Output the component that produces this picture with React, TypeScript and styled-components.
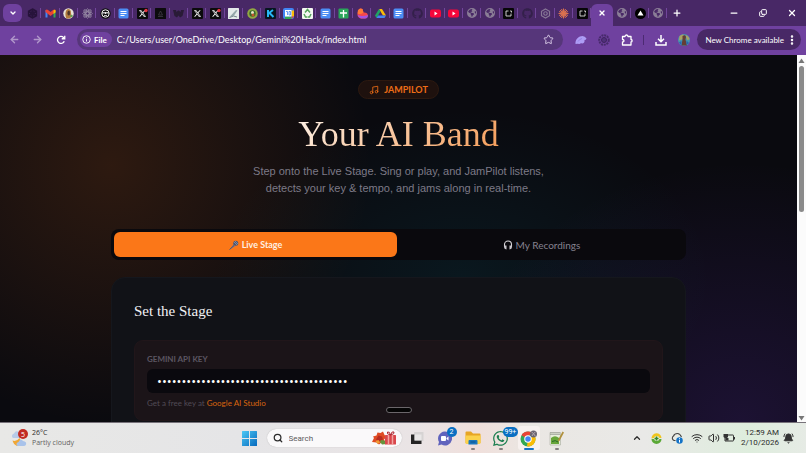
import React, { useState } from "react";
import styled, { createGlobalStyle } from "styled-components";
import { FaXTwitter, FaGithub, FaEarthAmericas, FaWhatsapp } from "react-icons/fa6";
import {
  ArrowLeft,
  ArrowRight,
  BellRing,
  ChevronDown,
  ChevronUp,
  Copy,
  Minus,
  MoreVertical,
  Music,
  Plus,
  Search,
  Star,
  Volume2,
  Wifi,
  X,
} from "lucide-react";

const ui = `Roboto, "Open Sans", sans-serif`;
const bar = `Lato, "Open Sans", sans-serif`;
const body = `Lato, "Liberation Sans", sans-serif`;
const display = `"Liberation Serif", serif`;

const GlobalStyle = createGlobalStyle`
  * { box-sizing: border-box; }
  body { margin: 0; background: #0a0a0f; font-variant-ligatures: none; }
  button, input { font: inherit; color: inherit; border: 0; padding: 0; margin: 0; background: none; }
  svg { display: block; flex: none; }
`;

const Desktop = styled.div`
  display: flex;
  flex-direction: column;
  height: 100vh;
  overflow: hidden;
  font-family: ${ui};
`;

/* ---------- Browser chrome ---------- */

const TabStrip = styled.div`
  display: flex;
  flex: none;
  height: 26px;
  padding-left: 3px;
  background: #482866;
  color: #fff;
`;

const TabSearch = styled.button`
  display: grid;
  place-items: center;
  width: 19px;
  height: 18px;
  margin: 4px 1px 0 0;
  border-radius: 6px;
  background: #6f419f;
`;

const TabButton = styled.button<{ $fixed?: boolean }>`
  display: flex;
  align-items: center;
  justify-content: center;
  flex: ${(p) => (p.$fixed ? "0 0 18px" : "1 1 0")};
  min-width: 0;
  height: 26px;
  background: linear-gradient(#71459b, #71459b) right 8px / 1px 10px no-repeat;
`;

const ActiveTab = styled.button`
  display: grid;
  place-items: center;
  flex: 0 0 22px;
  height: 22px;
  margin-top: 4px;
  padding-bottom: 4px;
  border-radius: 6px 6px 0 0;
  background: #6f419f;
`;

const StripButton = styled.button`
  display: grid;
  place-items: center;
  width: 20px;
  height: 26px;
`;

const WindowControls = styled.div`
  display: flex;
  margin-left: 32px;
`;

const WindowButton = styled.button`
  display: grid;
  place-items: center;
  width: 29px;
  height: 26px;
`;

const Toolbar = styled.div`
  display: flex;
  align-items: center;
  flex: none;
  height: 29px;
  padding: 0 5px 2px 3px;
  background: #6f419f;
  color: #fff;
  font-family: ${bar};
`;

const ToolButton = styled.button<{ $dim?: boolean }>`
  display: grid;
  place-items: center;
  width: 23px;
  height: 22px;
  opacity: ${(p) => (p.$dim ? 0.45 : 1)};
`;

const AddressBar = styled.div`
  display: flex;
  align-items: center;
  flex: 1;
  min-width: 0;
  height: 21px;
  margin: 0 6px 0 5px;
  padding: 0 9px 0 3px;
  border-radius: 11px;
  background: #56367a;
`;

const FileChip = styled.span`
  display: flex;
  align-items: center;
  gap: 3px;
  height: 15px;
  padding: 0 5px 0 2px;
  margin-right: 5px;
  border-radius: 8px;
  background: #6f419f;
  font-size: 8px;
  font-weight: 700;
`;

const AddressInput = styled.input`
  flex: 1;
  min-width: 0;
  font-size: 9px;
  outline: none;
`;

const ToolDivider = styled.span`
  width: 1px;
  height: 10px;
  margin: 0 5px;
  background: #4c2a72;
`;

const UpdateButton = styled.button`
  display: flex;
  align-items: center;
  gap: 2px;
  height: 21px;
  padding: 0 3px 0 8px;
  margin-left: 2px;
  border-radius: 11px;
  background: #482866;
  font-size: 8px;
  white-space: nowrap;
`;

/* ---------- Page ---------- */

const Viewport = styled.div`
  display: flex;
  flex: 1;
  min-height: 0;
`;

const Page = styled.main`
  position: relative;
  flex: 1;
  min-width: 0;
  overflow: hidden;
  padding: 25px 24px 0;
  font-family: ${body};
  background:
    radial-gradient(ellipse 260px 260px at 14% 30%, rgba(249, 115, 22, 0.15), transparent 100%),
    radial-gradient(ellipse 250px 170px at 58% 61%, rgba(6, 182, 212, 0.08), transparent 100%),
    radial-gradient(ellipse 290px 260px at 93% 100%, rgba(124, 58, 237, 0.16), transparent 100%),
    #0a0a0f;
`;

const Container = styled.div`
  display: flex;
  flex-direction: column;
  max-width: 575px;
  margin: 0 auto;
`;

const Hero = styled.header`
  display: flex;
  flex-direction: column;
  align-items: center;
  text-align: center;
`;

const Badge = styled.div`
  display: flex;
  align-items: center;
  gap: 5px;
  height: 19px;
  padding: 0 10px;
  border: 1px solid #2d1910;
  border-radius: 10px;
  background: #1e110e;
  color: #ee6d16;
  font-size: 9px;
  font-weight: 700;
`;

const Title = styled.h1`
  margin: 9px 0 0;
  font-family: ${display};
  font-size: 36px;
  font-weight: 400;
  line-height: 52px;
  background: linear-gradient(135deg, #fff5ec 0%, #f9ceac 40%, #f59a54 100%);
  -webkit-background-clip: text;
  background-clip: text;
  color: transparent;
`;

const Lead = styled.p`
  margin: 3px 0 0;
  color: #7d7a87;
  font-family: "Liberation Sans", sans-serif;
  font-size: 11px;
  line-height: 17px;
`;

const Tabs = styled.div`
  display: grid;
  grid-template-columns: 1fr 1fr;
  gap: 3px;
  margin-top: 32px;
  padding: 3px;
  border-radius: 8px;
  background: #0a090d;
`;

const TabChoice = styled.button<{ $active: boolean }>`
  display: flex;
  align-items: center;
  justify-content: center;
  gap: 3px;
  height: 25px;
  border-radius: 6px;
  background: ${(p) => (p.$active ? "#fb7718" : "transparent")};
  color: ${(p) => (p.$active ? "#fff0e2" : "#85828f")};
  font-size: ${(p) => (p.$active ? "9px" : "10px")};
  font-weight: ${(p) => (p.$active ? 700 : 400)};
`;

const Card = styled.section`
  margin-top: 17px;
  padding: 21px 22px 40px;
  border: 1px solid #15171d;
  border-radius: 14px;
  background: #111217;
`;

const CardTitle = styled.h2`
  margin: 0;
  color: #f2f1f4;
  font-family: ${display};
  font-size: 15px;
  font-weight: 400;
  line-height: 24px;
`;

const KeyPanel = styled.div`
  display: flex;
  flex-direction: column;
  margin-top: 17px;
  padding: 12px 12px 11px;
  border: 1px solid #21161a;
  border-radius: 9px;
  background: #1b1418;
`;

const KeyLabel = styled.label`
  color: #5c5662;
  font-size: 8px;
  font-weight: 700;
  line-height: 12px;
`;

const KeyInput = styled.input`
  height: 24px;
  margin-top: 4px;
  padding: 0 10px;
  border-radius: 6px;
  background: #0a090e;
  color: #fff;
  font-family: "Open Sans", sans-serif;
  font-size: 13px;
  outline: none;
`;

const KeyHint = styled.p`
  margin: 4px 0 0;
  color: #514b56;
  font-size: 8px;
  line-height: 12px;
`;

const KeyLink = styled.a`
  color: #d9640f;
  text-decoration: none;
`;

const Handle = styled.div`
  position: absolute;
  left: calc(50% - 13px);
  bottom: 9px;
  width: 26px;
  height: 6px;
  border: 1px solid #6b676b;
  border-radius: 3px;
  background: #050505;
`;

const ScrollTrack = styled.div`
  display: flex;
  flex-direction: column;
  align-items: center;
  flex: 0 0 9px;
  padding: 3px 0 1px;
  background: #fbfbfb;
`;

const ScrollRun = styled.div`
  display: flex;
  flex-direction: column;
  flex: 1;
  padding: 2px 0;
`;

const ScrollThumb = styled.div`
  flex: 0 0 42%;
  width: 5px;
  border-radius: 3px;
  background: #8a8a8a;
`;

/* ---------- Taskbar ---------- */

const Taskbar = styled.footer`
  display: grid;
  grid-template-columns: 1fr auto 1fr;
  align-items: center;
  flex: none;
  height: 31px;
  border-top: 1px solid #77727a;
  background: linear-gradient(90deg, #e8e8e6 0%, #e5e5e7 30%, #eae4e5 52%, #f0dfdb 59%, #eae7e3 66%, #e9e9e7 80%, #deeddd 93%, #e6ebe5 100%);
  color: #2c2c2c;
`;

const Weather = styled.button`
  display: flex;
  align-items: center;
  justify-self: start;
  gap: 4px;
  padding-left: 11px;
  text-align: left;
`;

const TwoLines = styled.span<{ $end?: boolean }>`
  display: flex;
  flex-direction: column;
  text-align: ${(p) => (p.$end ? "right" : "left")};
  font-family: ${(p) => (p.$end ? ui : `"Open Sans", sans-serif`)};
  font-size: ${(p) => (p.$end ? "8px" : "7px")};
  line-height: 10px;
  white-space: nowrap;
`;

const Muted = styled.span`
  color: #626262;
`;

const Apps = styled.div`
  display: flex;
  align-items: center;
`;

const StartButton = styled.button`
  display: grid;
  place-items: center;
  width: 18px;
  height: 24px;
  margin: 0 8px 0 5px;
`;

const SearchBox = styled.label`
  display: flex;
  align-items: center;
  gap: 6px;
  width: 135px;
  height: 18px;
  margin-right: 1px;
  padding: 0 5px 0 6px;
  border-radius: 9px;
  background: #faf9fa;
  box-shadow: 0 0 1px #a9a9a9;
`;

const SearchInput = styled.input`
  flex: 1;
  min-width: 0;
  font-size: 8px;
  outline: none;
  &::placeholder { color: #5c5c5c; opacity: 1; }
`;

const AppButton = styled.button<{ $mark?: "dot" | "bar" }>`
  position: relative;
  display: grid;
  place-items: center;
  width: 22px;
  height: 24px;
  margin: 0 3px;
  border-radius: 3px;
  background: ${(p) => (p.$mark === "bar" ? "#f7f1ef" : "transparent")};
  &::after {
    content: "";
    position: absolute;
    bottom: 0;
    width: ${(p) => (p.$mark === "bar" ? "10px" : p.$mark === "dot" ? "4px" : "0")};
    height: 2px;
    border-radius: 1px;
    background: ${(p) => (p.$mark === "bar" ? "#1673c4" : "#858080")};
  }
`;

const Count = styled.span`
  position: absolute;
  top: 1px;
  left: 13px;
  min-width: 10px;
  height: 10px;
  padding: 0 2px;
  border-radius: 5px;
  background: #0a6fc2;
  color: #fff;
  font-size: 7px;
  line-height: 10px;
  text-align: center;
`;

const Tray = styled.div`
  display: flex;
  align-items: center;
  justify-self: end;
  padding-right: 12px;
`;

const TrayButton = styled.button<{ $wide?: boolean }>`
  display: grid;
  place-items: center;
  width: ${(p) => (p.$wide ? "20px" : "15px")};
  height: 22px;
`;

const Clock = styled.button`
  margin: 0 4px 0 4px;
`;

/* ---------- Drawings ---------- */

type Kind =
  | "knot" | "gmail" | "avatar" | "flower" | "face" | "docs" | "x" | "xdot" | "peak" | "wing"
  | "photo" | "kiwi" | "k" | "calendar" | "recycle" | "sheets" | "swirl" | "drive" | "github"
  | "youtube" | "globe" | "frame" | "gear" | "burst" | "triangle";

const petals = [0, 45, 90, 135];

function Favicon({ kind }: { kind: Kind }) {
  if (kind === "github") return <FaGithub size={11} color="#33204a" />;
  if (kind === "globe") return <FaEarthAmericas size={10} color="#8a7d96" />;
  return (
    <svg width="11" height="11" viewBox="0 0 22 22" aria-hidden="true">
      {kind === "knot" && (
        <g fill="none" stroke="#27133b" strokeWidth="3">
          <circle cx="11" cy="11" r="3.4" />
          <path d="M11 2 18.8 6.5v9L11 20l-7.8-4.5v-9zM4 7l14 8M18 7 4 15M11 2v18" />
        </g>
      )}
      {kind === "gmail" && (
        <g>
          <path d="M1 4v15h4V7z" fill="#4285f4" />
          <path d="M21 4v15h-4V7z" fill="#34a853" />
          <path d="M1 4q3-2 5 0l5 4 5-4q3-2 5 0v4l-10 8L1 8z" fill="#ea4335" />
          <path d="M17 5q4-3 4 1v3l-4 3z" fill="#fbbc04" />
        </g>
      )}
      {kind === "avatar" && (
        <g>
          <circle cx="11" cy="11" r="10.5" fill="#e9e3d6" />
          <path d="M7 21C3 14 5 3 10 2q6 0 6 8l1 8q-4 4-10 3" fill="#b17b3d" />
          <path d="M10 6q4-2 4 4t-3 5q-4-3-1-9" fill="#4d3528" />
          <circle cx="17" cy="16" r="2.5" fill="#5f9c54" />
        </g>
      )}
      {kind === "flower" && (
        <g fill="none" stroke="#9183a0" strokeWidth="2">
          {petals.map((a) => (
            <ellipse key={a} cx="11" cy="11" rx="3.4" ry="9.5" transform={`rotate(${a} 11 11)`} />
          ))}
        </g>
      )}
      {kind === "face" && (
        <g>
          <circle cx="11" cy="11" r="10.5" fill="#111" />
          <circle cx="11" cy="11" r="7.4" fill="none" stroke="#eee" strokeWidth="2" />
          <path d="M5 8h12v4H5z" fill="#eee" />
          <circle cx="8" cy="10.5" r="1.6" fill="#111" />
          <circle cx="14" cy="10.5" r="1.6" fill="#111" />
          <path d="M8 15h6" stroke="#eee" strokeWidth="1.6" />
        </g>
      )}
      {kind === "docs" && (
        <g>
          <rect x="1" y="1" width="20" height="20" rx="3" fill="#4c8df5" />
          <path d="M5 7h12M5 11h12M5 15h8" stroke="#fff" strokeWidth="2" />
        </g>
      )}
      {(kind === "x" || kind === "xdot") && (
        <g>
          <rect width="22" height="22" rx="2" fill="#0b0b0c" />
          <FaXTwitter x="3" y="3" width="16" height="16" color="#fff" />
          {kind === "xdot" && <circle cx="18" cy="5" r="3.4" fill="#e33340" />}
        </g>
      )}
      {kind === "peak" && (
        <g>
          <rect width="22" height="22" rx="1" fill="#0c0b0d" />
          <path d="m11 6 4 8H7z" fill="none" stroke="#3f3b45" strokeWidth="1.6" />
          <path d="M6 17h10" stroke="#3f3b45" strokeWidth="1.6" />
        </g>
      )}
      {kind === "wing" && <path d="M0 4h6l1 4 3-3h2l3 3 1-4h6l-3 12-5 3-3-4-3 4-5-3z" fill="#291b37" />}
      {kind === "photo" && (
        <g>
          <rect width="22" height="22" rx="1" fill="#e3e9ea" />
          <path d="M3 18 16 4l3 1-7 10z" fill="#94a6aa" />
          <path d="m3 19 8-3 7 2" stroke="#728489" strokeWidth="2" fill="none" />
        </g>
      )}
      {kind === "kiwi" && (
        <g>
          <circle cx="11" cy="11" r="10.5" fill="#92a842" />
          <circle cx="11" cy="11" r="6.4" fill="#38672f" />
          <circle cx="11" cy="9" r="3" fill="#eee8c9" />
          <circle cx="12" cy="14" r="3" fill="#c1532b" />
        </g>
      )}
      {kind === "k" && (
        <g>
          <rect width="22" height="22" rx="2" fill="#07151f" />
          <path d="M6 4v14M7 11l9-7M9 10l8 8" stroke="#27b6f6" strokeWidth="4" />
        </g>
      )}
      {kind === "calendar" && (
        <g>
          <rect width="22" height="22" rx="4" fill="#4285f4" />
          <path d="M17 5h5v12h-5z" fill="#fbbc04" />
          <path d="M4 17h13v5H4z" fill="#34a853" />
          <path d="M17 17h5l-5 5z" fill="#ea4335" />
          <rect x="4" y="4" width="13" height="13" fill="#fff" />
          <path d="M6 7h3v7M12 7h3v7h-3z" stroke="#4285f4" strokeWidth="1.6" fill="none" />
        </g>
      )}
      {kind === "recycle" && (
        <g>
          <rect width="22" height="22" rx="2" fill="#f4f8f2" />
          <path d="m6 9 5-6 5 6M18 12l-3 6h-4M4 12l3 6h3" fill="none" stroke="#55a45c" strokeWidth="3" />
        </g>
      )}
      {kind === "sheets" && (
        <g>
          <rect x="1" y="1" width="20" height="20" rx="2" fill="#2aa55a" />
          <path d="M11 4v15M4 10h14" stroke="#fff" strokeWidth="2.6" />
        </g>
      )}
      {kind === "swirl" && (
        <g>
          <path d="M2 5q3-6 9-3l2 7q8-1 9 6-1 5-6 6H8q-7-2-7-8z" fill="#f6484a" />
          <path d="M1 13q5 3 9 3 6 0 12-2 0 7-6 7H8q-6-2-7-8" fill="#a653e0" />
          <path d="M2 5q3-6 9-3l2 7q-6 5-12 2z" fill="#ff7a38" />
        </g>
      )}
      {kind === "drive" && (
        <g>
          <path d="M8 2h6l8 13h-6z" fill="#fbbc04" />
          <path d="M8 2 0 15l3 5 8-13z" fill="#1fa463" />
          <path d="M6 15h16l-3 5H3z" fill="#4285f4" />
        </g>
      )}
      {kind === "youtube" && (
        <g>
          <rect y="3" width="22" height="16" rx="4" fill="#f5073b" />
          <path d="m9 7 6 4-6 4z" fill="#fff" />
        </g>
      )}
      {kind === "frame" && (
        <g>
          <rect width="22" height="22" rx="2" fill="#060607" />
          <path d="M11 6H6v10h10v-5M14 6h3v3" fill="none" stroke="#ddd" strokeWidth="1.8" />
        </g>
      )}
      {kind === "gear" && (
        <g fill="none" stroke="#877796" strokeWidth="2.4">
          <path d="m11 2 8 4.5v9L11 20l-8-4.5v-9z" />
          <circle cx="11" cy="11" r="3.5" />
        </g>
      )}
      {kind === "burst" && (
        <path
          d="M11 1v20M1 11h20M4 4l14 14M18 4 4 18M7 2l8 18M15 2 7 20M2 7l18 8M2 15l18-8"
          stroke="#d9714f"
          strokeWidth="2"
        />
      )}
      {kind === "triangle" && (
        <g>
          <circle cx="11" cy="11" r="11" fill="#000" />
          <path d="m11 5 6 10H5z" fill="#fff" />
        </g>
      )}
    </svg>
  );
}

const leftTabs: Kind[] = [
  "knot", "gmail", "avatar", "flower", "face", "docs", "xdot", "peak", "wing", "x", "xdot",
  "photo", "kiwi", "k", "calendar", "recycle", "docs", "sheets", "swirl", "drive", "docs",
  "github", "youtube", "youtube", "globe", "globe", "frame", "github", "gear", "burst", "frame",
];
const rightTabs: Kind[] = ["globe", "triangle", "globe"];

const ReloadIcon = () => (
  <svg width="10" height="10" viewBox="0 0 20 20" fill="none" stroke="#fff" strokeWidth="2.6">
    <path d="M16.5 12.5A7 7 0 1 1 15 5l2 2" />
    <path d="M17.5 1.5v6h-6" />
  </svg>
);

const InfoIcon = () => (
  <svg width="9" height="9" viewBox="0 0 18 18" fill="none" stroke="#fff" strokeWidth="1.8">
    <circle cx="9" cy="9" r="7.5" />
    <path d="M9 8v5M9 4.5v2" />
  </svg>
);

const WaveIcon = () => (
  <svg width="12" height="12" viewBox="0 0 24 24">
    <path d="M1 20C0 10 8 4 15 4q5 0 8 5-1 3-4 3 1 5-4 7-4-1-6 1-4-1-8 0z" fill="#ad9cf5" />
    <path d="M6 15q3-5 8-6" stroke="#8b76dd" strokeWidth="1.5" fill="none" />
  </svg>
);

const DottedIcon = () => (
  <svg width="12" height="12" viewBox="0 0 24 24" fill="none">
    <circle cx="12" cy="12" r="9.5" stroke="#472a6b" strokeWidth="4" strokeDasharray="4 1.5" />
    <circle cx="12" cy="12" r="5" fill="#50317a" stroke="#3e235f" strokeWidth="2" />
  </svg>
);

const PuzzleIcon = () => (
  <svg width="12" height="12" viewBox="0 0 24 24" fill="none" stroke="#fff" strokeWidth="2.6">
    <path d="M3 5h5c0-4 6-4 6 0h6v6c3 0 3 5 0 5v6H3v-6c4 0 4-5 0-5z" strokeLinejoin="round" />
  </svg>
);

const DownloadIcon = () => (
  <svg width="12" height="12" viewBox="0 0 24 24" fill="none" stroke="#fff" strokeWidth="3">
    <path d="M12 2v13M6 9.5l6 6 6-6M2 16v6h20v-6" />
  </svg>
);

const ProfileIcon = () => (
  <svg width="12" height="12" viewBox="0 0 24 24">
    <circle cx="12" cy="12" r="12" fill="#4894ae" />
    <path d="M3 4q6-5 9-2l-2 8-8 3zM15 2q8 3 8 9l-5 1z" fill="#a8a265" />
    <path d="M9 4q6-4 7 2l-1 5 3 12H7l2-12z" fill="#643e34" />
    <path d="m7 14-5 3 5 6zM17 13l5 5-5 4z" fill="#2665b0" />
  </svg>
);

const MicIcon = () => (
  <svg width="10" height="10" viewBox="0 0 20 20" aria-hidden="true">
    <path d="M2 19 9 8l4 4z" fill="#8b7581" />
    <path d="m1 19 9-8" stroke="#4f5670" strokeWidth="2" />
    <circle cx="13.5" cy="6.5" r="5" fill="#4e5872" />
    <path d="m10 4 6 6M12 2l6 6" stroke="#a6abc0" strokeWidth="1.2" />
  </svg>
);

const HeadphonesIcon = () => (
  <svg width="10" height="10" viewBox="0 0 20 20" aria-hidden="true">
    <path d="M3 13V9a7 7 0 0 1 14 0v4" fill="none" stroke="#d8d6da" strokeWidth="2.2" />
    <path d="M2 11h5v8q-5-1-5-5zM18 11h-5v8q5-1 5-5z" fill="#c9c6cc" />
  </svg>
);

const ArrowGlyph = ({ down }: { down?: boolean }) => (
  <svg width="7" height="6" viewBox="0 0 14 12">
    <path d={down ? "M1 2h12L7 11z" : "M1 10h12L7 1z"} fill="#777" />
  </svg>
);

const WeatherIcon = () => (
  <svg width="17" height="19" viewBox="0 0 34 38">
    <path d="M4 18a5 5 0 0 1 2-9q4-8 10-2 8 1 6 11z" fill="#b7cbe8" />
    <path d="M3 23q8 3 14-5 4 5 3 11-2 6-8 5-7-3-9-11" fill="#f0a735" />
    <path d="M13 34q-5-5 2-8 4-8 9-2 8 1 6 7-1 3-5 3z" fill="#a9c3ea" />
    <circle cx="24" cy="10" r="10" fill="#c22a21" />
    <text x="24" y="15" fill="#fff" fontSize="14" fontFamily="Open Sans, sans-serif" textAnchor="middle">5</text>
  </svg>
);

const WindowsIcon = () => (
  <svg width="15" height="15" viewBox="0 0 30 30">
    <defs>
      <linearGradient id="win" x1="0" y1="0" x2="1" y2="1">
        <stop stopColor="#4cc8f5" />
        <stop offset="1" stopColor="#0669bd" />
      </linearGradient>
    </defs>
    <path d="M0 1q0-1 1-1h13v14H0zM16 0h13q1 0 1 1v13H16zM0 16h14v14H1q-1 0-1-1zM16 16h14v13q0 1-1 1H16z" fill="url(#win)" />
  </svg>
);

const GiftIcon = () => (
  <svg width="26" height="14" viewBox="0 0 52 28">
    <path d="m2 22 4-8-2-3 7-2 2-6 6 1 5-3 3 7 4 4-5 5 2 5-7 1-5 4-5-4z" fill="#df4b23" />
    <path d="m10 17 5-8 7 2 2 6-8 4z" fill="#b82c20" />
    <path d="m20 18 7 1 4 7-9 1-4-5z" fill="#65933c" />
    <path d="m9 20 6-2 3 5-5 3z" fill="#ef9b35" />
    <rect x="28" y="8" width="22" height="19" rx="1" fill="#d9474c" />
    <path d="M35 8v19M43 8v19" stroke="#f2a4a0" strokeWidth="3" />
    <path d="M39 8q-9-2-6-6 4-2 6 6 3-9 7-6 2 4-7 6" fill="none" stroke="#af2730" strokeWidth="2" />
  </svg>
);

const TaskViewIcon = () => (
  <svg width="14" height="14" viewBox="0 0 28 28">
    <rect x="8" y="2" width="19" height="18" rx="1" fill="#d6d3d3" />
    <path d="M2 7h7v12h14v7H2z" fill="#242424" />
    <path d="M9 7h14v12H9z" fill="#f1efef" opacity=".7" />
  </svg>
);

const ChatIcon = () => (
  <svg width="15" height="15" viewBox="0 0 30 30">
    <path d="M15 1a14 14 0 1 1-6 26l-7 2 2-7A14 14 0 0 1 15 1" fill="#6063bd" />
    <rect x="8" y="10" width="10" height="10" rx="2" fill="#fff" />
    <path d="m19 14 4-3v8l-4-3z" fill="#fff" />
  </svg>
);

const FolderIcon = () => (
  <svg width="16" height="14" viewBox="0 0 32 28">
    <path d="M1 3q0-2 2-2h9l4 4h13q2 0 2 2v17H1z" fill="#e7a524" />
    <path d="M1 9h30v15q0 2-2 2H3q-2 0-2-2z" fill="#fbd14b" />
    <path d="M7 27v-7q0-2 2-2h14q2 0 2 2v7z" fill="#1b77bd" />
    <path d="M11 22h10" stroke="#0b528e" strokeWidth="2" />
  </svg>
);

const ChromeIcon = () => (
  <svg width="17" height="17" viewBox="0 0 34 34">
    <circle cx="16" cy="18" r="15" fill="#34a853" />
    <path d="M16 18 3 10.5A15 15 0 0 1 29 10.5H16z" fill="#ea4335" />
    <path d="M16 18 29 10.5A15 15 0 0 1 16 33l-2-1z" fill="#fbbc04" />
    <circle cx="16" cy="18" r="7.5" fill="#fff" />
    <circle cx="16" cy="18" r="5.5" fill="#4285f4" />
    <circle cx="27" cy="8" r="7" fill="#6b6572" />
    <path d="m23 4 4 3 4-3M24 12l3-5 4 6" stroke="#b4aab0" strokeWidth="2" fill="none" />
  </svg>
);

const NotepadIcon = () => (
  <svg width="15" height="15" viewBox="0 0 30 30">
    <path d="M2 3h21v25H2z" fill="#e8efdc" stroke="#9a9f92" />
    <path d="M3 4h19M3 7h19" stroke="#777" strokeWidth="2" strokeDasharray="2 2" />
    <path d="M4 14q8-7 16 0v12H4z" fill="#68a63b" />
    <path d="M6 21q7-4 12 1" stroke="#286829" strokeWidth="2" fill="none" />
    <path d="m18 18 9-17 3 2-9 17-3 1z" fill="#b0903c" />
  </svg>
);

const SyncIcon = () => (
  <svg width="11" height="11" viewBox="0 0 22 22">
    <circle cx="11" cy="11" r="7" fill="#e6eedb" />
    <path d="M1 11a10 10 0 0 1 20-1h-4q-1-4-6-4-4 0-5 4z" fill="#efc51e" />
    <path d="M21 12a10 10 0 0 1-20 0h5q1 4 5 4 5 0 6-4z" fill="#5aa936" />
    <path d="M11 7v8M7 11h8" stroke="#348828" strokeWidth="3" />
  </svg>
);

const CloudIcon = () => (
  <svg width="12" height="12" viewBox="0 0 24 24">
    <path d="M9 17H6a5 5 0 0 1-1-9q2-5 8-5 5 0 8 7" fill="none" stroke="#444" strokeWidth="2.2" />
    <circle cx="17" cy="17" r="6.5" fill="#1474c8" />
    <path d="M17 16v5M17 12.5v2" stroke="#fff" strokeWidth="2" />
  </svg>
);

const BatteryIcon = () => (
  <svg width="12" height="10" viewBox="0 0 24 20">
    <path d="M9 4h11q1 0 1 1v10q0 1-1 1H4V9" fill="none" stroke="#333" strokeWidth="2" />
    <path d="M22 8h2v5h-2z" fill="#333" />
    <path d="M1 2h9v6q-4 5-9 0zM5 10h6v5H5z" fill="#333" />
  </svg>
);

const storedKey = "k".repeat(39);

export default function App() {
  const [tab, setTab] = useState<"live" | "recordings">("live");
  const [apiKey, setApiKey] = useState(storedKey);
  const [address, setAddress] = useState("C:/Users/user/OneDrive/Desktop/Gemini%20Hack/index.html");

  return (
    <Desktop>
      <GlobalStyle />
      <TabStrip>
        <TabSearch aria-label="Search tabs"><ChevronDown size={8} strokeWidth={4} /></TabSearch>
        {leftTabs.map((kind, i) => (
          <TabButton key={i} aria-label={`${kind} tab`}><Favicon kind={kind} /></TabButton>
        ))}
        <ActiveTab aria-label="Close tab"><X size={8} strokeWidth={4} /></ActiveTab>
        {rightTabs.map((kind, i) => (
          <TabButton key={i} $fixed aria-label={`${kind} tab`}><Favicon kind={kind} /></TabButton>
        ))}
        <StripButton aria-label="New tab"><Plus size={10} strokeWidth={3} /></StripButton>
        <WindowControls>
          <WindowButton aria-label="Minimize"><Minus size={10} strokeWidth={3} /></WindowButton>
          <WindowButton aria-label="Restore"><Copy size={8} strokeWidth={3} transform="scale(1 -1)" /></WindowButton>
          <WindowButton aria-label="Close window"><X size={10} strokeWidth={3} /></WindowButton>
        </WindowControls>
      </TabStrip>

      <Toolbar>
        <ToolButton $dim aria-label="Back"><ArrowLeft size={11} strokeWidth={3} /></ToolButton>
        <ToolButton $dim aria-label="Forward"><ArrowRight size={11} strokeWidth={3} /></ToolButton>
        <ToolButton aria-label="Reload"><ReloadIcon /></ToolButton>
        <AddressBar>
          <FileChip><InfoIcon />File</FileChip>
          <AddressInput aria-label="Address" value={address} onChange={(e) => setAddress(e.target.value)} />
          <Star size={11} strokeWidth={2} color="#ddd0ea" />
        </AddressBar>
        <ToolButton aria-label="Wave extension"><WaveIcon /></ToolButton>
        <ToolButton aria-label="Dotted extension"><DottedIcon /></ToolButton>
        <ToolButton aria-label="Extensions"><PuzzleIcon /></ToolButton>
        <ToolDivider />
        <ToolButton aria-label="Downloads"><DownloadIcon /></ToolButton>
        <ToolButton aria-label="Profile"><ProfileIcon /></ToolButton>
        <UpdateButton>New Chrome available<MoreVertical size={12} strokeWidth={3} /></UpdateButton>
      </Toolbar>

      <Viewport>
        <Page>
          <Container>
            <Hero>
              <Badge><Music size={10} strokeWidth={2} />JAMPILOT</Badge>
              <Title>Your AI Band</Title>
              <Lead>
                Step onto the Live Stage. Sing or play, and JamPilot listens,
                <br />
                detects your key &amp; tempo, and jams along in real-time.
              </Lead>
            </Hero>
            <Tabs role="tablist">
              <TabChoice role="tab" aria-selected={tab === "live"} $active={tab === "live"} onClick={() => setTab("live")}>
                <MicIcon />Live Stage
              </TabChoice>
              <TabChoice
                role="tab"
                aria-selected={tab === "recordings"}
                $active={tab === "recordings"}
                onClick={() => setTab("recordings")}
              >
                <HeadphonesIcon />My Recordings
              </TabChoice>
            </Tabs>
            <Card>
              <CardTitle>Set the Stage</CardTitle>
              <KeyPanel>
                <KeyLabel htmlFor="api-key">GEMINI API KEY</KeyLabel>
                <KeyInput id="api-key" type="password" value={apiKey} onChange={(e) => setApiKey(e.target.value)} />
                <KeyHint>
                  Get a free key at <KeyLink href="#ai-studio">Google AI Studio</KeyLink>
                </KeyHint>
              </KeyPanel>
            </Card>
          </Container>
          <Handle />
        </Page>
        <ScrollTrack>
          <ArrowGlyph />
          <ScrollRun><ScrollThumb /></ScrollRun>
          <ArrowGlyph down />
        </ScrollTrack>
      </Viewport>

      <Taskbar>
        <Weather>
          <WeatherIcon />
          <TwoLines><span>26°C</span><Muted>Partly cloudy</Muted></TwoLines>
        </Weather>
        <Apps>
          <StartButton aria-label="Start"><WindowsIcon /></StartButton>
          <SearchBox>
            <Search size={10} strokeWidth={3} />
            <SearchInput aria-label="Search" placeholder="Search" />
            <GiftIcon />
          </SearchBox>
          <AppButton aria-label="Task view"><TaskViewIcon /></AppButton>
          <AppButton aria-label="Chat"><ChatIcon /><Count>2</Count></AppButton>
          <AppButton aria-label="File Explorer" $mark="dot"><FolderIcon /></AppButton>
          <AppButton aria-label="WhatsApp" $mark="dot"><FaWhatsapp size={17} color="#1d7f50" /><Count>99+</Count></AppButton>
          <AppButton aria-label="Chrome" $mark="bar"><ChromeIcon /></AppButton>
          <AppButton aria-label="Notepad++" $mark="dot"><NotepadIcon /></AppButton>
        </Apps>
        <Tray>
          <TrayButton $wide aria-label="Hidden icons"><ChevronUp size={10} strokeWidth={3} /></TrayButton>
          <TrayButton $wide aria-label="Sync"><SyncIcon /></TrayButton>
          <TrayButton $wide aria-label="Cloud"><CloudIcon /></TrayButton>
          <TrayButton $wide aria-label="Network"><Wifi size={12} strokeWidth={2} /></TrayButton>
          <TrayButton aria-label="Volume"><Volume2 size={12} strokeWidth={2} /></TrayButton>
          <TrayButton aria-label="Battery"><BatteryIcon /></TrayButton>
          <Clock><TwoLines $end><span>12:59 AM</span><span>2/10/2026</span></TwoLines></Clock>
          <BellRing size={11} strokeWidth={2} fill="#333" />
        </Tray>
      </Taskbar>
    </Desktop>
  );
}
